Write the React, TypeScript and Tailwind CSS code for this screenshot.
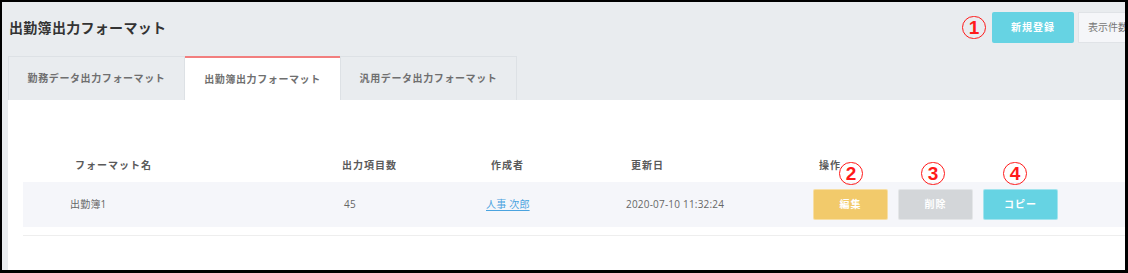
import React from 'react';

const FONT = { fontFamily: "'Open Sans', 'Noto Sans CJK JP', sans-serif" };

function Mark({ n, className = '' }: { n: number; className?: string }) {
  return (
    <span
      className={`flex items-center justify-center w-[24px] h-[23px] rounded-full border-[1.5px] border-[#ff1a1a] text-[#ff1a1a] text-[19px] font-bold leading-none ${className}`}
      style={{ fontFamily: "'Liberation Sans', sans-serif" }}
    >
      {n}
    </span>
  );
}

function ActionButton({ label, color }: { label: string; color: string }) {
  return (
    <button
      className={`w-[75px] h-[31px] rounded-[2px] border border-white/40 text-white text-[10px] font-bold tracking-[1px] ${color}`}
    >
      {label}
    </button>
  );
}

export default function App() {
  return (
    <div
      className="w-[1128px] h-[273px] border-black border-t-2 border-l-2 border-r-[3px] border-b-[3px] bg-[#e9ecef] overflow-hidden flex flex-col"
      style={FONT}
    >
      {/* Page header */}
      <div className="h-[54px] shrink-0 pt-[10px] pl-[7px] flex items-start justify-between -mr-[3px]">
        <div className="h-[31px] flex items-center text-[14px] font-bold text-[#333] tracking-[0.3px]">
          出勤簿出力フォーマット
        </div>
        <div className="flex items-center">
          <Mark n={1} />
          <button className="ml-[6px] w-[82px] h-[31px] bg-[#66d3e3] rounded-[2px] text-white text-[10px] font-bold tracking-[1px]">
            新規登録
          </button>
          <div className="ml-[4px] w-[50px] h-[31px] bg-[#f5f6f9] border border-r-0 border-[#e0e3e7] flex items-center pl-[9px] text-[10px] text-[#777] whitespace-nowrap overflow-hidden">
            表示件数
          </div>
        </div>
      </div>

      {/* Tabs */}
      <div className="ml-[6px] flex h-[44px] shrink-0 text-[10px] font-semibold text-[#6f6f6f] tracking-[0.6px]">
        <div className="w-[177px] flex items-center justify-center border border-b-0 border-[#dde1e5] bg-[#e9ecef]">
          勤務データ出力フォーマット
        </div>
        <div className="w-[155px] flex items-center justify-center bg-white border-t-2 border-[#f27e7e]">
          出勤簿出力フォーマット
        </div>
        <div className="w-[177px] flex items-center justify-center border border-b-0 border-[#dde1e5] bg-[#e9ecef]">
          汎用データ出力フォーマット
        </div>
      </div>

      {/* Panel */}
      <div className="ml-[6px] flex-1 bg-white relative pt-[55px]">
        <div className="flex items-center h-[20px] pl-[52px] ml-[15px] text-[10px] font-semibold text-[#5a5a5a] tracking-[1px]">
          <div className="w-[267px]">フォーマット名</div>
          <div className="w-[149px]">出力項目数</div>
          <div className="w-[140px]">作成者</div>
          <div className="w-[188px]">更新日</div>
          <div>操作</div>
        </div>

        <div className="mt-[7px] ml-[15px] h-[45px] bg-[#f5f6fa] flex items-center pl-[47px] text-[10px] text-[#666] tracking-[0.2px]">
          <div className="w-[274px]">出勤簿1</div>
          <div className="w-[142px]">45</div>
          <div className="w-[140px]">
            <a className="text-[#4aa3df] underline underline-offset-2">人事 次郎</a>
          </div>
          <div className="w-[187px]">2020-07-10 11:32:24</div>
          <div className="flex gap-[10px]">
            <ActionButton label="編集" color="bg-[#f2ca6b]" />
            <ActionButton label="削除" color="bg-[#d3d6d9]" />
            <ActionButton label="コピー" color="bg-[#66d3e3]" />
          </div>
        </div>

        <div className="mt-[8px] ml-[15px] h-px bg-[#eeeeee]" />

        {/* annotation marks */}
        <Mark n={2} className="absolute left-[831px] top-[62px]" />
        <Mark n={3} className="absolute left-[913px] top-[62px]" />
        <Mark n={4} className="absolute left-[995px] top-[62px]" />
      </div>
    </div>
  );
}
